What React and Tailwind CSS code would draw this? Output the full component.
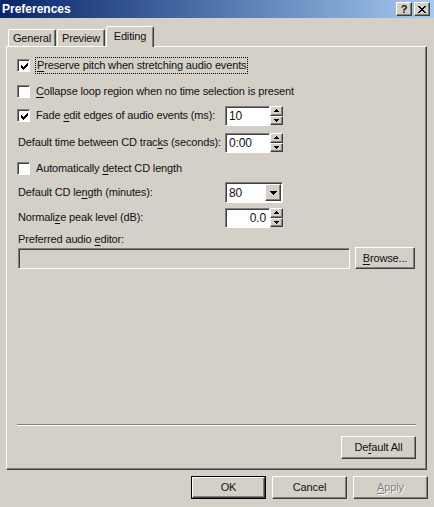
import React from 'react';

// classic 3D borders
const raised = "border border-t-white border-l-white border-r-[#404040] border-b-[#404040] shadow-[inset_-1px_-1px_#808080]";
const sunken = "border border-t-[#808080] border-l-[#808080] border-r-white border-b-white shadow-[inset_1px_1px_#404040]";

const U = ({ children }) => <span className="underline underline-offset-[2px] decoration-1">{children}</span>;

const Check = () => (
    <svg width="7" height="7" viewBox="0 0 7 7" shapeRendering="crispEdges">
        <rect x="0" y="2" width="1" height="3" fill="black" />
        <rect x="1" y="3" width="1" height="3" fill="black" />
        <rect x="2" y="4" width="1" height="3" fill="black" />
        <rect x="3" y="3" width="1" height="3" fill="black" />
        <rect x="4" y="2" width="1" height="3" fill="black" />
        <rect x="5" y="1" width="1" height="3" fill="black" />
        <rect x="6" y="0" width="1" height="3" fill="black" />
    </svg>
);

const Checkbox = ({ checked }) => (
    <div className={`w-[13px] h-[13px] bg-white shrink-0 -ml-[1px] flex items-center justify-center pl-[1px] pt-[1px] ${sunken}`}>
        {checked && <Check />}
    </div>
);

const Tri = ({ down, w = 5, h = 3 }) => (
    <svg width={w} height={h} viewBox={`0 0 ${w} ${h}`} shapeRendering="crispEdges">
        <polygon points={down ? `0,0 ${w},0 ${w / 2},${h}` : `0,${h} ${w},${h} ${w / 2},0`} fill="black" />
    </svg>
);

const Spin = ({ value, right }) => (
    <div className="flex items-center">
        <div className={`w-[45px] h-[20px] bg-white flex items-center px-[3px] text-[12px] ${right ? 'justify-end' : ''} ${sunken}`}>
            {value}
        </div>
        <div className="flex flex-col w-[13px] h-[19px]">
            <div className={`flex-1 flex items-center justify-center bg-[#d4d0c8] ${raised}`}><Tri /></div>
            <div className={`flex-1 flex items-center justify-center bg-[#d4d0c8] ${raised}`}><Tri down /></div>
        </div>
    </div>
);

const Button = ({ children, className = "", disabled }) => (
    <div className={`w-[75px] h-[23px] flex items-center justify-center bg-[#d4d0c8] ${raised} ${className} ${disabled ? 'text-[#808080] [text-shadow:1px_1px_0_#fff]' : ''}`}>
        {children}
    </div>
);

const Tab = ({ label, active }) => (
    <div className={`w-[48px] flex items-center justify-center bg-[#d4d0c8] border-t border-l border-r border-t-white border-l-white border-r-[#404040] shadow-[inset_-1px_0_#808080] rounded-t-[2px]
        ${active ? 'h-[21px] -mb-[1px] relative z-10 pb-[2px]' : 'h-[17px]'}`}>
        {label}
    </div>
);

export default function App() {
    return (
        <div className="w-[434px] h-[507px] bg-[#d4d0c8] overflow-hidden text-[11px] tracking-[-0.15px] whitespace-nowrap text-[#111] font-['Liberation_Sans',Arial,sans-serif] leading-none">
            {/* title bar */}
            <div className="h-[18px] flex items-center justify-between bg-gradient-to-r from-[#0a246a] to-[#a6caf0] pl-[2px] pr-[4px]">
                <span className="text-white font-bold text-[12px] tracking-normal">Preferences</span>
                <div className="flex gap-[2px]">
                    <div className={`w-[16px] h-[14px] flex items-center justify-center bg-[#d4d0c8] font-bold text-[11px] ${raised}`}>?</div>
                    <div className={`w-[16px] h-[14px] flex items-center justify-center bg-[#d4d0c8] ${raised}`}>
                        <svg width="8" height="7" viewBox="0 0 8 7" shapeRendering="crispEdges">
                            <path d="M0.5 0 L7.5 7 M7.5 0 L0.5 7" stroke="black" strokeWidth="1.6" />
                        </svg>
                    </div>
                </div>
            </div>

            <div className="pt-[8px] pl-[6px]">
                {/* tabs */}
                <div className="flex items-end h-[20px] pl-[2px] gap-[1px]">
                    <Tab label="General" />
                    <Tab label="Preview" />
                    <Tab label="Editing" active />
                </div>

                {/* panel */}
                <div className={`w-[421px] h-[424px] flex flex-col pl-[11px] pr-[10px] ${raised}`}>
                    <div className="flex flex-col pt-[8px]">
                        <div className="h-[21px] flex items-center gap-[5px]">
                            <Checkbox checked />
                            <span className="border border-dotted border-black px-[1px] py-[2px]"><U>P</U>reserve pitch when stretching audio events</span>
                        </div>
                        <div className="h-[21px] flex items-center gap-[6px] mt-[5px]">
                            <Checkbox />
                            <span><U>C</U>ollapse loop region when no time selection is present</span>
                        </div>
                        <div className="h-[21px] flex items-center mt-[3px]">
                            <div className="w-[207px] flex items-center gap-[6px]">
                                <Checkbox checked />
                                <span>Fade <U>e</U>dit edges of audio events (ms):</span>
                            </div>
                            <Spin value="10" />
                        </div>
                        <div className="h-[21px] flex items-center mt-[6px]">
                            <span className="w-[207px]">Default time between CD trac<U>k</U>s (seconds):</span>
                            <Spin value="0:00" />
                        </div>
                        <div className="h-[21px] flex items-center gap-[6px] mt-[5px]">
                            <Checkbox />
                            <span>Automatically <U>d</U>etect CD length</span>
                        </div>
                        <div className="h-[21px] flex items-center mt-[3px]">
                            <span className="w-[207px]">Default CD le<U>n</U>gth (minutes):</span>
                            <div className={`w-[58px] h-[21px] bg-white flex items-center justify-between pl-[3px] pr-[1px] text-[12px] ${sunken}`}>
                                <span>80</span>
                                <div className={`w-[16px] h-[17px] flex items-center justify-center bg-[#d4d0c8] ${raised}`}>
                                    <Tri down w={7} h={4} />
                                </div>
                            </div>
                        </div>
                        <div className="h-[21px] flex items-center mt-[4px]">
                            <span className="w-[207px]">Normali<U>z</U>e peak level (dB):</span>
                            <Spin value="0.0" right />
                        </div>
                        <div className="h-[13px] flex items-center mt-[5px]">
                            <span>Preferred audio <U>e</U>ditor:</span>
                        </div>
                        <div className="h-[22px] flex items-center mt-[1px] gap-[5px]">
                            <div className={`w-[332px] h-[21px] bg-[#d4d0c8] ${sunken}`}></div>
                            <div className={`w-[60px] h-[22px] flex items-center justify-center bg-[#d4d0c8] ${raised}`}>
                                <span><U>B</U>rowse...</span>
                            </div>
                        </div>
                    </div>

                    <div className="mt-auto -ml-[1px] h-[2px] border-t border-t-[#808080] border-b border-b-white"></div>
                    <div className="flex justify-end mt-[10px] mb-[10px]">
                        <Button>De<U>f</U>ault All</Button>
                    </div>
                </div>
            </div>

            {/* dialog buttons */}
            <div className="flex justify-end gap-[6px] pr-[6px] mt-[6px]">
                <div className="w-[75px] h-[23px] border border-black">
                    <div className={`w-full h-full flex items-center justify-center bg-[#d4d0c8] ${raised}`}>OK</div>
                </div>
                <Button>Cancel</Button>
                <Button disabled><U>A</U>pply</Button>
            </div>
        </div>
    );
}
